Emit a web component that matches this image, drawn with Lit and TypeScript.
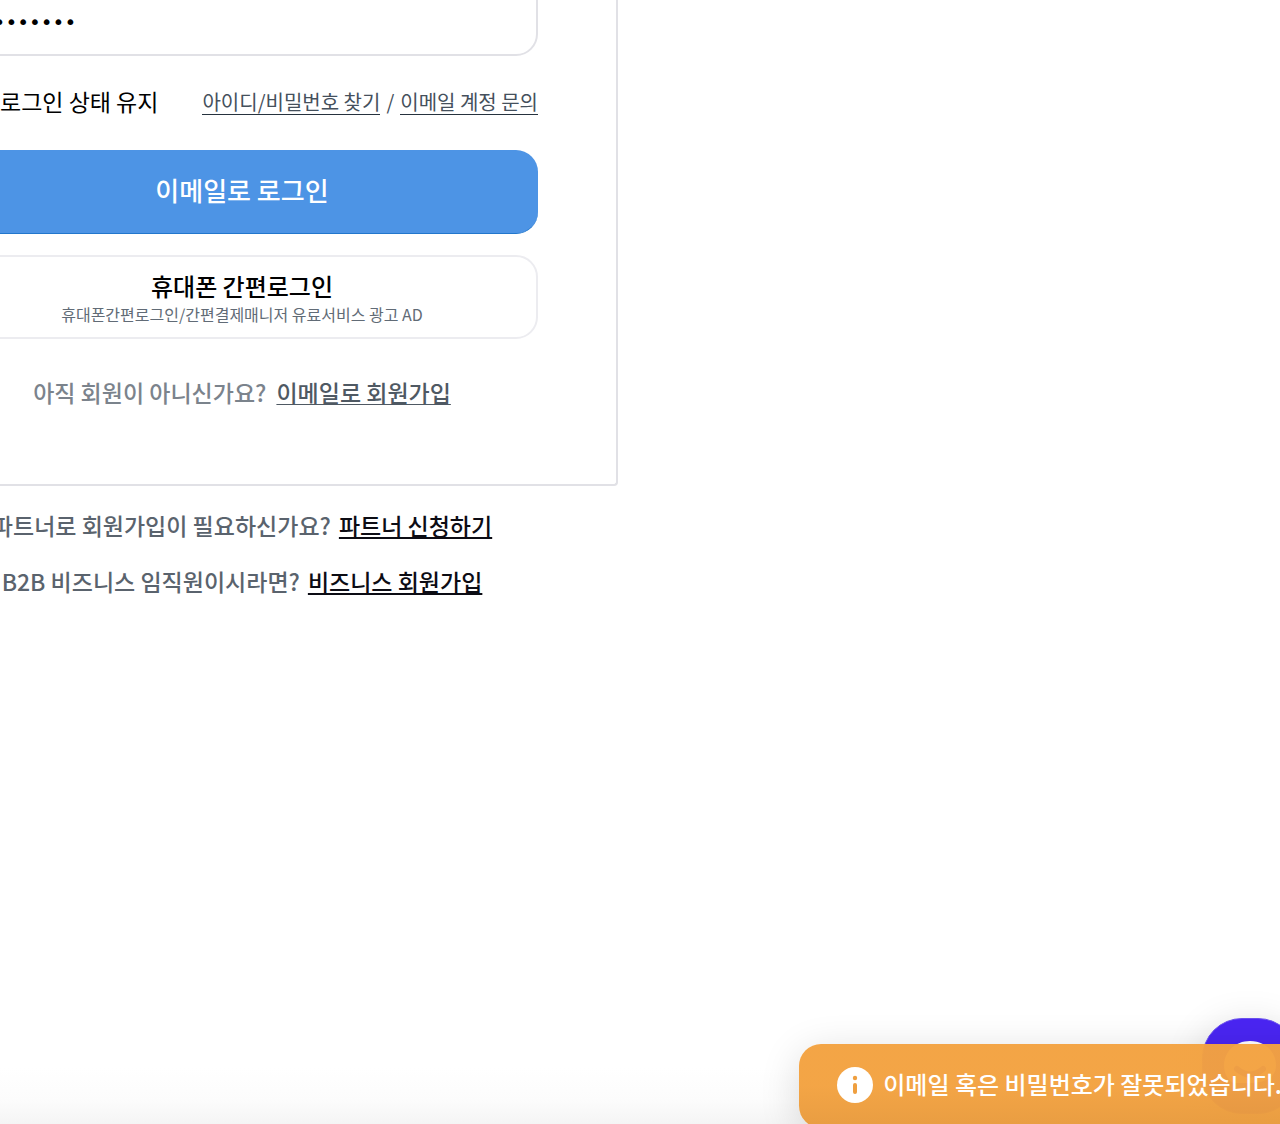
import { LitElement, html, css } from "lit";
import { customElement, state } from "lit/decorators.js";

@customElement("login-card")
export class LoginCard extends LitElement {
  @state() private password = "secret123";

  static styles = css`
    :host {
      display: block;
    }
    .card {
      box-sizing: border-box;
      padding: 0 78px 74px;
      border: 2px solid #e1e1e6;
      border-top: none;
      border-radius: 0 0 4px 4px;
    }
    .form {
      display: flex;
      flex-direction: column;
    }
    .password {
      box-sizing: border-box;
      width: 100%;
      height: 84px;
      padding: 16px 22px 0;
      border: 2px solid #e1e1e6;
      border-radius: 22px;
      background: #fff;
      color: #000;
      font: 20px "DejaVu Sans", sans-serif;
      outline: none;
    }
    .options {
      display: flex;
      align-items: center;
      justify-content: space-between;
      padding: 28px 0 30px;
      line-height: 36px;
    }
    .keep {
      display: flex;
      align-items: center;
      gap: 14px;
      padding-bottom: 2px;
      color: #000;
      font-size: 23px;
      line-height: 34px;
    }
    .keep input {
      width: 40px;
      height: 34px;
      margin: 0;
    }
    .help {
      display: flex;
      align-items: center;
      gap: 6px;
      color: #45505c;
      font-size: 20px;
    }
    .help a {
      color: inherit;
      line-height: 24px;
      text-decoration: none;
      border-bottom: 1px solid #26323e;
    }
    .button {
      display: flex;
      flex-direction: column;
      align-items: center;
      justify-content: center;
      box-sizing: border-box;
      width: 100%;
      height: 84px;
      margin: 0 0 21px;
      padding: 0;
      border-radius: 22px;
      font-family: inherit;
      cursor: pointer;
    }
    .email {
      padding-bottom: 4px;
      border: none;
      border-bottom: 1px solid #2277cc;
      background: #4d94e5;
      color: #fff;
      font-size: 26px;
      font-weight: 500;
    }
    .phone {
      padding-top: 2px;
      border: 2px solid #ececf0;
      background: #fff;
    }
    .phone-title {
      color: #000;
      font-size: 24px;
      font-weight: 500;
      line-height: 32px;
    }
    .phone-note {
      color: #616b76;
      font-size: 16px;
      line-height: 24px;
    }
    .signup {
      display: flex;
      justify-content: center;
      gap: 10px;
      margin: 14px 0 0;
      color: #7b838c;
      font-size: 23px;
      font-weight: 500;
      line-height: 36px;
    }
    .signup a {
      color: #4f5963;
      text-underline-offset: 2px;
      text-decoration-thickness: 1px;
    }
  `;

  private onInput(e: InputEvent) {
    this.password = (e.target as HTMLInputElement).value;
  }

  render() {
    return html`
      <section class="card">
        <form class="form" @submit=${(e: Event) => e.preventDefault()}>
          <input
            class="password"
            type="password"
            aria-label="비밀번호"
            .value=${this.password}
            @input=${this.onInput}
          />
          <div class="options">
            <label class="keep"><input type="checkbox" />로그인 상태 유지</label>
            <div class="help">
              <a href="#find">아이디/비밀번호 찾기</a>
              <span>/</span>
              <a href="#inquiry">이메일 계정 문의</a>
            </div>
          </div>
          <button class="button email" type="submit">이메일로 로그인</button>
          <button class="button phone" type="button">
            <span class="phone-title">휴대폰 간편로그인</span>
            <span class="phone-note">휴대폰간편로그인/간편결제매니저 유료서비스 광고 AD</span>
          </button>
        </form>
        <p class="signup">
          <span>아직 회원이 아니신가요?</span>
          <a href="#signup">이메일로 회원가입</a>
        </p>
      </section>
    `;
  }
}

@customElement("chat-launcher")
export class ChatLauncher extends LitElement {
  static styles = css`
    :host {
      display: block;
    }
    .launcher {
      display: block;
      width: 96px;
      height: 96px;
      padding: 0;
      border: 1px solid #6a50ee;
      border-radius: 40px;
      background: #4a25f2;
      box-shadow: 0 8px 40px rgba(0, 0, 0, 0.14);
      cursor: pointer;
    }
    .face {
      display: block;
      width: 100%;
      height: 100%;
    }
  `;

  render() {
    return html`
      <button class="launcher" aria-label="채팅 상담">
        <svg class="face" viewBox="0 0 94 94" aria-hidden="true">
          <path
            d="M47 22C62 22 73 33 73 46S62 64 47 64H30C24 60 21 54 21 46C21 33 32 22 47 22Z"
            fill="#fff"
          />
          <path
            d="M34 50Q47 61 60 50"
            fill="none"
            stroke="#4a25f2"
            stroke-width="6"
            stroke-linecap="round"
          />
        </svg>
      </button>
    `;
  }
}

@customElement("toast-message")
export class ToastMessage extends LitElement {
  static styles = css`
    :host {
      display: block;
    }
    .toast {
      display: flex;
      align-items: center;
      gap: 10px;
      box-sizing: border-box;
      height: 84px;
      padding: 0 38px 2px;
      border-radius: 22px;
      background: linear-gradient(
        to bottom,
        rgba(243, 162, 64, 0.97) 50%,
        rgba(232, 154, 60, 0.97)
      );
      box-shadow: 0 8px 40px rgba(0, 0, 0, 0.14);
      color: #fff;
      font-size: 24px;
      font-weight: 500;
      white-space: nowrap;
    }
    .icon {
      flex: none;
      width: 36px;
      height: 36px;
    }
    .text {
      padding-bottom: 4px;
    }
  `;

  render() {
    return html`
      <div class="toast" role="alert">
        <svg class="icon" viewBox="0 0 36 36" aria-hidden="true">
          <circle cx="18" cy="18" r="18" fill="#fff" />
          <circle cx="18" cy="11" r="2.2" fill="#ef9f3f" />
          <path d="M18 18V25" stroke="#ef9f3f" stroke-width="4" stroke-linecap="round" />
        </svg>
        <span class="text"><slot></slot></span>
      </div>
    `;
  }
}

@customElement("app-root")
export class AppRoot extends LitElement {
  static styles = css`
    :host {
      display: block;
      font-family: "Noto Sans CJK KR", "Noto Sans", sans-serif;
    }
    .page {
      position: relative;
      box-sizing: border-box;
      min-height: 100vh;
      overflow: hidden;
      background: linear-gradient(to top, #f5f5f5 0, #fcfcfc 24px, #fff 56px);
    }
    .login {
      max-width: 752px;
      margin: -28px 0 0 -134px;
    }
    .more {
      display: flex;
      flex-direction: column;
      align-items: center;
      gap: 20px;
      padding-top: 21px;
      color: #5a636d;
      font-size: 23px;
      font-weight: 500;
      line-height: 36px;
    }
    .more p {
      display: flex;
      gap: 8px;
      margin: 0;
      white-space: nowrap;
    }
    .more a {
      color: #0c0c14;
      text-underline-offset: 2px;
      text-decoration-thickness: 2px;
    }
    .chat {
      position: absolute;
      right: -18px;
      bottom: 10px;
    }
    .notice {
      position: absolute;
      right: -40px;
      bottom: -4px;
    }
  `;

  render() {
    return html`
      <main class="page">
        <div class="login">
          <login-card></login-card>
          <div class="more">
            <p><span>파트너로 회원가입이 필요하신가요?</span><a href="#partner">파트너 신청하기</a></p>
            <p><span>B2B 비즈니스 임직원이시라면?</span><a href="#business">비즈니스 회원가입</a></p>
          </div>
        </div>
        <chat-launcher class="chat"></chat-launcher>
        <toast-message class="notice">이메일 혹은 비밀번호가 잘못되었습니다.</toast-message>
      </main>
    `;
  }
}
